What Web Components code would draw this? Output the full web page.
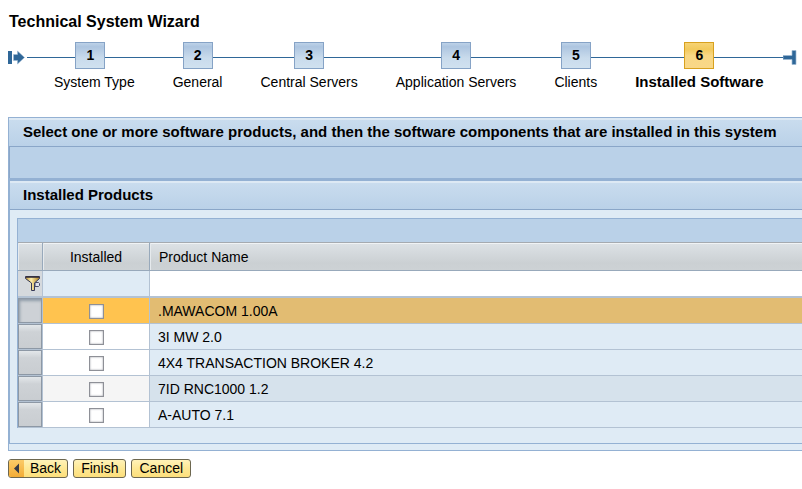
<!DOCTYPE html>
<html lang="en">
<head>
<meta charset="utf-8">
<meta name="viewport" content="width=device-width, initial-scale=1">
<title>Technical System Wizard</title>
<style>
  * { box-sizing: border-box; }
  body {
    margin: 0;
    padding: 12px 0 0 8px;
    background: #fff;
    color: #000;
    font: 14px/20px "Liberation Sans", Arial, sans-serif;
    overflow-x: hidden;

    --line: #94b1d3;
    --line-dark: #8aa6c8;
    --bar: #bad1e8;
    --surface: #dfebf5;
  }
  h1 { margin: 0; padding-left: 1px; font-size: 16px; line-height: 20px; }
  wizard-steps { margin-top: 10px; }
  wizard-panel { margin-top: 25px; }
  footer { display: flex; gap: 5px; padding: 8px 0; }
</style>
</head>
<body>
  <h1>Technical System Wizard</h1>

  <wizard-steps>
    <wizard-step number="1">System Type</wizard-step>
    <wizard-step number="2">General</wizard-step>
    <wizard-step number="3">Central Servers</wizard-step>
    <wizard-step number="4">Application Servers</wizard-step>
    <wizard-step number="5">Clients</wizard-step>
    <wizard-step number="6" active>Installed Software</wizard-step>
  </wizard-steps>

  <wizard-panel>
    <span slot="title">Select one or more software products, and then the software components that are installed in this system</span>
    <product-section>
      <span slot="title">Installed Products</span>
      <product-table></product-table>
    </product-section>
  </wizard-panel>

  <footer>
    <wizard-button back>Back</wizard-button>
    <wizard-button>Finish</wizard-button>
    <wizard-button>Cancel</wizard-button>
  </footer>

<script>
(() => {
  // Shared base: every element renders once into an open shadow root
  class BaseElement extends HTMLElement {
    constructor() {
      super();
      this.attachShadow({ mode: 'open' });
    }
    connectedCallback() {
      this.shadowRoot.innerHTML = `<style>* { box-sizing: border-box; }</style>${this.render()}`;
    }
  }

  class WizardSteps extends BaseElement {
    render() {
      return `
        <style>
          :host { display: flex; align-items: flex-start; }
          svg { flex: none; display: block; margin-top: 8px; }
          .start { margin-right: 2px; }
          ::slotted(:first-child) { --pad-left: 27px; }
        </style>
        <svg class="start" width="17" height="15" viewBox="0 0 17 15" aria-hidden="true">
          <path d="M0 1h4v13H0z" fill="#2f6798"/>
          <path d="M5.500 4.500h4V1l7 6.500-7 6.500v-3.500h-4z" fill="#2f6798" stroke="#9db9d3" stroke-width=".6"/>
        </svg>
        <slot></slot>
        <svg width="14" height="15" viewBox="0 0 14 15" aria-hidden="true">
          <path d="M0 5.500h9V.500h4v14H9v-5H0z" fill="#2f6798" stroke="#9db9d3" stroke-width=".7"/>
        </svg>
      `;
    }
  }

  class WizardStep extends BaseElement {
    render() {
      return `
        <style>
          :host { display: block; flex: none; text-align: center; white-space: nowrap; }
          .track { display: flex; }
          .track::before, .track::after {
            content: "";
            flex: 1;
            height: 1px;
            margin-top: 15px;
            background: #2f6798;
          }
          .box {
            width: 30px;
            height: 27px;
            padding-bottom: 2px;
            border: 1px solid #86a3c6;
            background: linear-gradient(#bdd2e8, #adc5e0 15%, #c9dbec 60%, #d0e1ef);
            font: bold 14px/24px "Liberation Sans", Arial, sans-serif;
          }
          .label { padding: 3px 19px 0 var(--pad-left, 19px); }
          :host([active]) .box {
            border-color: #d8a11f;
            background: linear-gradient(#f6d374, #f2c95c 25%, #f8d785 50%, #f9d888);
          }
          :host([active]) .label { font-size: 15px; font-weight: bold; }
        </style>
        <div class="track"><div class="box">${this.getAttribute('number')}</div></div>
        <div class="label"><slot></slot></div>
      `;
    }
  }

  const headerCss = `
    h2 {
      margin: 0;
      border-bottom: 1px solid var(--line-dark);
      background: linear-gradient(#dde9f4 2px, #c9dcee 2px, #bad1e8);
      font-size: 15px;
      font-weight: bold;
      line-height: 28px;
      white-space: nowrap;
    }
  `;

  class WizardPanel extends BaseElement {
    render() {
      return `
        <style>
          ${headerCss}
          :host {
            display: block;
            border: solid var(--line);
            border-width: 1px 0 1px 1px;
            background: var(--surface);
            padding-bottom: 6px;
          }
          h2 { padding-left: 14px; }
          .toolbar {
            height: 31px;
            border-left: 1px solid var(--line-dark);
            background: var(--bar);
          }
        </style>
        <h2><slot name="title"></slot></h2>
        <div class="toolbar"></div>
        <slot></slot>
      `;
    }
  }

  class ProductSection extends BaseElement {
    render() {
      return `
        <style>
          ${headerCss}
          :host {
            display: block;
            border: solid var(--line);
            border-width: 3px 0 1px 1px;
          }
          h2 { padding-left: 13px; }
          .body { padding: 8px 0 15px 7px; }
        </style>
        <h2><slot name="title"></slot></h2>
        <div class="body"><slot></slot></div>
      `;
    }
  }

  const PRODUCTS = [
    '.MAWACOM 1.00A',
    '3I MW 2.0',
    '4X4 TRANSACTION BROKER 4.2',
    '7ID RNC1000 1.2',
    'A-AUTO 7.1',
  ];

  class ProductTable extends BaseElement {
    render() {
      const rows = PRODUCTS.map((name, i) => `
        <tr class="${i === 0 ? 'selected' : ''}">
          <td class="sel"><button type="button" aria-label="Select row ${i + 1}"></button></td>
          <td class="check"><input type="checkbox" aria-labelledby="p${i}"></td>
          <td class="name" id="p${i}">${name}</td>
        </tr>`).join('');

      return `
        <style>
          :host { display: block; border: solid var(--line); border-width: 1px 0 0 1px; }
          .toolbar { height: 23px; background: var(--bar); }
          table { width: 100%; border-collapse: separate; border-spacing: 0; table-layout: fixed; }
          .c-sel { width: 25px; }
          .c-check { width: 107px; }
          th, td { padding: 0; border: solid #b3c2d3; border-width: 0 1px 1px 0; text-align: left; }
          th:last-child, td:last-child { border-right: 0; }

          th {
            height: 29px;
            border-top: 1px solid #a5aab0;
            border-color: #a5aab0 #98a9bb #98a9bb;
            background: linear-gradient(#f0f3f5 1px, #dce1e5 1px, #cbd0d3 75%, #cdd2d5);
            box-shadow: inset 1px 0 #e6eaed;
            font-weight: normal;
            line-height: 26px;
          }
          th.check { text-align: center; }
          th.name { padding-left: 9px; }

          .filter td { height: 27px; border-bottom-width: 2px; background: var(--surface); }
          .filter .sel { background: #d5d9dd; }
          .filter svg { display: block; margin-left: 6px; }
          .filter input {
            display: block;
            width: 100%;
            height: 25px;
            border: 0;
            padding: 0 8px;
            background: #fff;
            font: inherit;
            outline: 0;
          }

          tbody td { height: 26px; line-height: 23px; }
          tbody .check { padding-top: 2px; background: #fff; text-align: center; }
          tbody .name { padding: 2px 0 0 8px; background: var(--surface); }
          tbody tr:nth-child(4) .check { background: #f5f5f5; }
          tbody tr:nth-child(4) .name { background: #d6e2ec; }
          tbody .selected .check { background: #ffc34f; }
          tbody .selected .name { background: #e2bc72; }

          .sel button {
            display: block;
            width: 24px;
            height: 25px;
            border: 1px solid #8d98a5;
            padding: 0;
            background: linear-gradient(#e3e7ea, #ced2d6 30%, #c9cdd1);
          }
          .selected .sel button {
            background: #cdd1d6;
            box-shadow: inset 1px 2px 3px #8f9ba8;
          }
          input[type=checkbox] {
            appearance: none;
            display: block;
            width: 15px;
            height: 15px;
            margin: 0 auto;
            border: 1px solid #8e9097;
            background: #fff;
            box-shadow: inset 0 0 2px #8e9097;
          }
          input[type=checkbox]:checked { background: #4a7ba8; }
        </style>
        <div class="toolbar"></div>
        <table>
          <colgroup><col class="c-sel"><col class="c-check"><col></colgroup>
          <thead>
            <tr><th></th><th class="check">Installed</th><th class="name">Product Name</th></tr>
            <tr class="filter">
              <td class="sel">
                <svg width="17" height="17" viewBox="0 0 17 17" aria-hidden="true">
                  <defs>
                    <linearGradient id="gold">
                      <stop offset="0" stop-color="#b98f30"/>
                      <stop offset=".4" stop-color="#fff0ac"/>
                      <stop offset="1" stop-color="#a8791b"/>
                    </linearGradient>
                  </defs>
                  <path d="M1.500 1.500h14v2L10.500 8v7.500h-4V8l-5-4.500z" fill="url(#gold)"/>
                  <path d="M1.500 1.500h14v2L10.500 8v7.500h-3V8l-6-4.500z" fill="none" stroke="#35385a" stroke-width="1"/>
                  <path d="M2 2h13" stroke="#35303c" stroke-width="1.600"/>
                  <path d="M11 12V7.500h3.500l1 1v2l-1 1H11" fill="#dfe2ea" stroke="#484b67" stroke-width="1"/>
                </svg>
              </td>
              <td></td>
              <td><input type="text" aria-label="Filter by product name"></td>
            </tr>
          </thead>
          <tbody>${rows}</tbody>
        </table>
      `;
    }
  }

  class WizardButton extends BaseElement {
    render() {
      const icon = this.hasAttribute('back')
        ? `<span class="icon"><svg width="7" height="11" viewBox="0 0 7 11" aria-hidden="true"><path d="M6 .500v10L1 5.500z" fill="#353a46"/></svg></span>`
        : '';
      return `
        <style>
          :host { display: block; }
          button {
            display: flex;
            align-items: center;
            height: 19px;
            border: 1px solid #6d674f;
            border-radius: 3px;
            padding: 0 7px;
            overflow: hidden;
            background: linear-gradient(#fff2b8, #fee894 50%, #fddf7c);
            color: #000;
            font: 14px/17px "Liberation Sans", Arial, sans-serif;
          }
          :host([back]) button { padding: 0 6px 0 0; }
          .icon {
            display: flex;
            align-items: center;
            justify-content: center;
            width: 15px;
            height: 17px;
            margin-right: 6px;
            background: linear-gradient(#fbcb68, #f3ac36);
          }
        </style>
        <button type="button">${icon}<slot></slot></button>
      `;
    }
  }

  customElements.define('wizard-steps', WizardSteps);
  customElements.define('wizard-step', WizardStep);
  customElements.define('wizard-panel', WizardPanel);
  customElements.define('product-section', ProductSection);
  customElements.define('product-table', ProductTable);
  customElements.define('wizard-button', WizardButton);
})();
</script>
</body>
</html>
